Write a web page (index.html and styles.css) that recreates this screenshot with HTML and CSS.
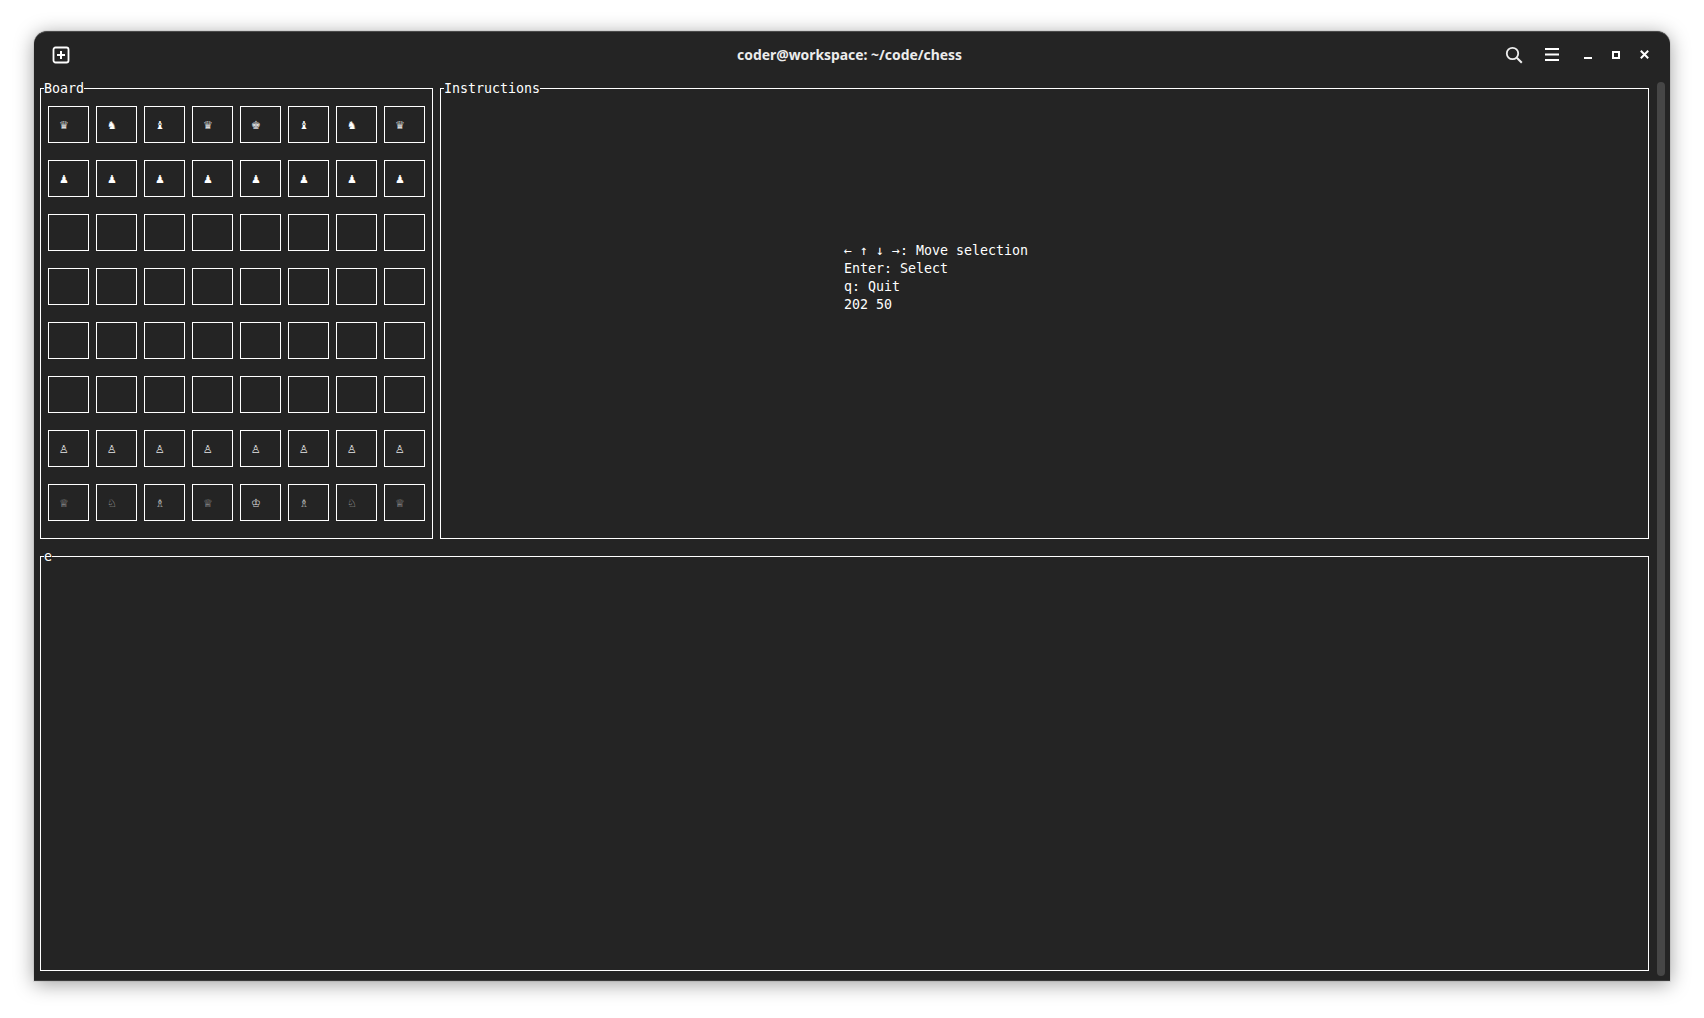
FILE: index.html
```html
<!DOCTYPE html>
<html lang="en">
<head>
<meta charset="utf-8">
<title>coder@workspace: ~/code/chess</title>
<link rel="stylesheet" href="styles.css">
</head>
<body>
<div class="window">
  <header class="titlebar">
    <div class="tb-left">
      <svg class="icon" width="18" height="18" viewBox="0 0 18 18"><rect x="1.500" y="1.500" width="15" height="15" rx="2" fill="none" stroke="#fff" stroke-width="1.800"/><path d="M9 5v8M5 9h8" stroke="#fff" stroke-width="2" fill="none"/></svg>
    </div>
    <div class="tb-title">coder@workspace: ~/code/chess</div>
    <div class="tb-right">
      <svg class="icon search" width="18" height="18" viewBox="0 0 18 18"><circle cx="7.500" cy="7.500" r="5.700" fill="none" stroke="#eee" stroke-width="1.800"/><path d="M11.800 11.800l5 5" stroke="#eee" stroke-width="2" fill="none"/></svg>
      <svg class="icon burger" width="14" height="13" viewBox="0 0 14 13"><path d="M0 1h14M0 6.500h14M0 12h14" stroke="#fff" stroke-width="2" fill="none"/></svg>
      <svg class="icon min" width="8" height="10" viewBox="0 0 8 10"><path d="M0 8h8" stroke="#fff" stroke-width="2" fill="none"/></svg>
      <svg class="icon max" width="8" height="8" viewBox="0 0 8 8"><rect x="1" y="1" width="6" height="6" fill="none" stroke="#fff" stroke-width="2"/></svg>
      <svg class="icon close" width="9" height="9" viewBox="0 0 9 9"><path d="M.8.8l7.400 7.400M8.200.8L.8 8.200" stroke="#fff" stroke-width="2" fill="none"/></svg>
    </div>
  </header>
  <main class="term">
    <div class="top-row">
      <section class="panel board-panel">
        <span class="legend">Board</span>
        <div class="board">
          <div class="cell p-q">♛</div><div class="cell p-n">♞</div><div class="cell p-b">♝</div><div class="cell p-q">♛</div><div class="cell p-k">♚</div><div class="cell p-b">♝</div><div class="cell p-n">♞</div><div class="cell p-q">♛</div>
          <div class="cell p-p">♟</div><div class="cell p-p">♟</div><div class="cell p-p">♟</div><div class="cell p-p">♟</div><div class="cell p-p">♟</div><div class="cell p-p">♟</div><div class="cell p-p">♟</div><div class="cell p-p">♟</div>
          <div class="cell"></div><div class="cell"></div><div class="cell"></div><div class="cell"></div><div class="cell"></div><div class="cell"></div><div class="cell"></div><div class="cell"></div>
          <div class="cell"></div><div class="cell"></div><div class="cell"></div><div class="cell"></div><div class="cell"></div><div class="cell"></div><div class="cell"></div><div class="cell"></div>
          <div class="cell"></div><div class="cell"></div><div class="cell"></div><div class="cell"></div><div class="cell"></div><div class="cell"></div><div class="cell"></div><div class="cell"></div>
          <div class="cell"></div><div class="cell"></div><div class="cell"></div><div class="cell"></div><div class="cell"></div><div class="cell"></div><div class="cell"></div><div class="cell"></div>
          <div class="cell w-p">♙</div><div class="cell w-p">♙</div><div class="cell w-p">♙</div><div class="cell w-p">♙</div><div class="cell w-p">♙</div><div class="cell w-p">♙</div><div class="cell w-p">♙</div><div class="cell w-p">♙</div>
          <div class="cell w-q">♕</div><div class="cell w-n">♘</div><div class="cell w-b">♗</div><div class="cell w-q">♕</div><div class="cell w-k">♔</div><div class="cell w-b">♗</div><div class="cell w-n">♘</div><div class="cell w-q">♕</div>
        </div>
      </section>
      <section class="panel instr-panel">
        <span class="legend">Instructions</span>
        <pre class="instr">← ↑ ↓ →: Move selection
Enter: Select
q: Quit
202 50</pre>
      </section>
    </div>
    <section class="panel log-panel">
      <span class="legend">e</span>
    </section>
    <div class="scrollbar"></div>
  </main>
</div>
</body>
</html>
```
FILE: styles.css
```css
html, body { margin: 0; padding: 0; background: #fff; }
body { width: 1704px; height: 1018px; overflow: hidden; padding: 31px 34px 0; box-sizing: border-box; }
.window {
  width: 1636px; height: 950px; background: #242424; color: #fff;
  border-radius: 13px 13px 0 0;
  box-shadow: 0 0 0 1px rgba(0,0,0,.06), 0 3px 20px rgba(0,0,0,.38);
  border-top: 1px solid #4a4a4a; border-bottom: 1px solid #3c3c3c;
  box-sizing: border-box;
  font-family: "DejaVu Sans Mono", monospace; font-size: 13.3px; line-height: 18px;
  display: flex; flex-direction: column;
  opacity: .999;
}
.titlebar {
  height: 47px; flex: none; display: grid; grid-template-columns: 1fr auto 1fr; align-items: center;
  padding: 0 21px 2px 18px; box-sizing: border-box;
}
.tb-left { display: flex; align-items: center; }
.tb-title {
  font-family: "Noto Sans", sans-serif; font-weight: 700; font-size: 13.9px; color: #ececec;
  position: relative; left: -1px;
}
.tb-right { display: flex; align-items: center; justify-content: flex-end; }
.icon { display: block; flex: none; }
.search { margin-right: 22px; }
.burger { margin-right: 25px; }
.min { margin-right: 20px; }
.max { margin-right: 20px; }
.term { position: relative; flex: 1; padding: 9px 0 0 6px; }
.top-row { display: flex; gap: 7px; margin-bottom: 17px; }
.panel { position: relative; border: 1px solid #fff; box-sizing: border-box; }
.board-panel { width: 393px; height: 451px; padding: 17px 0 0 7px; }
.instr-panel { width: 1209px; height: 451px; padding: 153px 0 0 403px; }
.log-panel { width: 1609px; height: 415px; }
.legend { position: absolute; left: 3px; top: -9px; background: #242424; white-space: pre; }
.board { display: grid; grid-template-columns: repeat(8, 41px); grid-auto-rows: 37px; gap: 17px 7px; }
.cell {
  border: 1px solid #fff; box-sizing: border-box; padding-left: 10px;
  font-size: 11px; line-height: 37px; font-family: "DejaVu Sans", sans-serif; color: #fff;
}
.p-q, .p-k { color: #d8d8d8; }
.p-n, .p-b, .p-p { color: #fff; }
.w-p { color: #e4e4e4; }
.w-q { color: #a8a8a8; }
.w-n { color: #b4b4b4; }
.w-b { color: #c0c0c0; }
.w-k { color: #d8d8d8; }
.instr { margin: 0; font: inherit; }
.scrollbar { position: absolute; right: 5px; top: 3px; width: 8px; height: 894px; border-radius: 4px; background: #464646; }
```
